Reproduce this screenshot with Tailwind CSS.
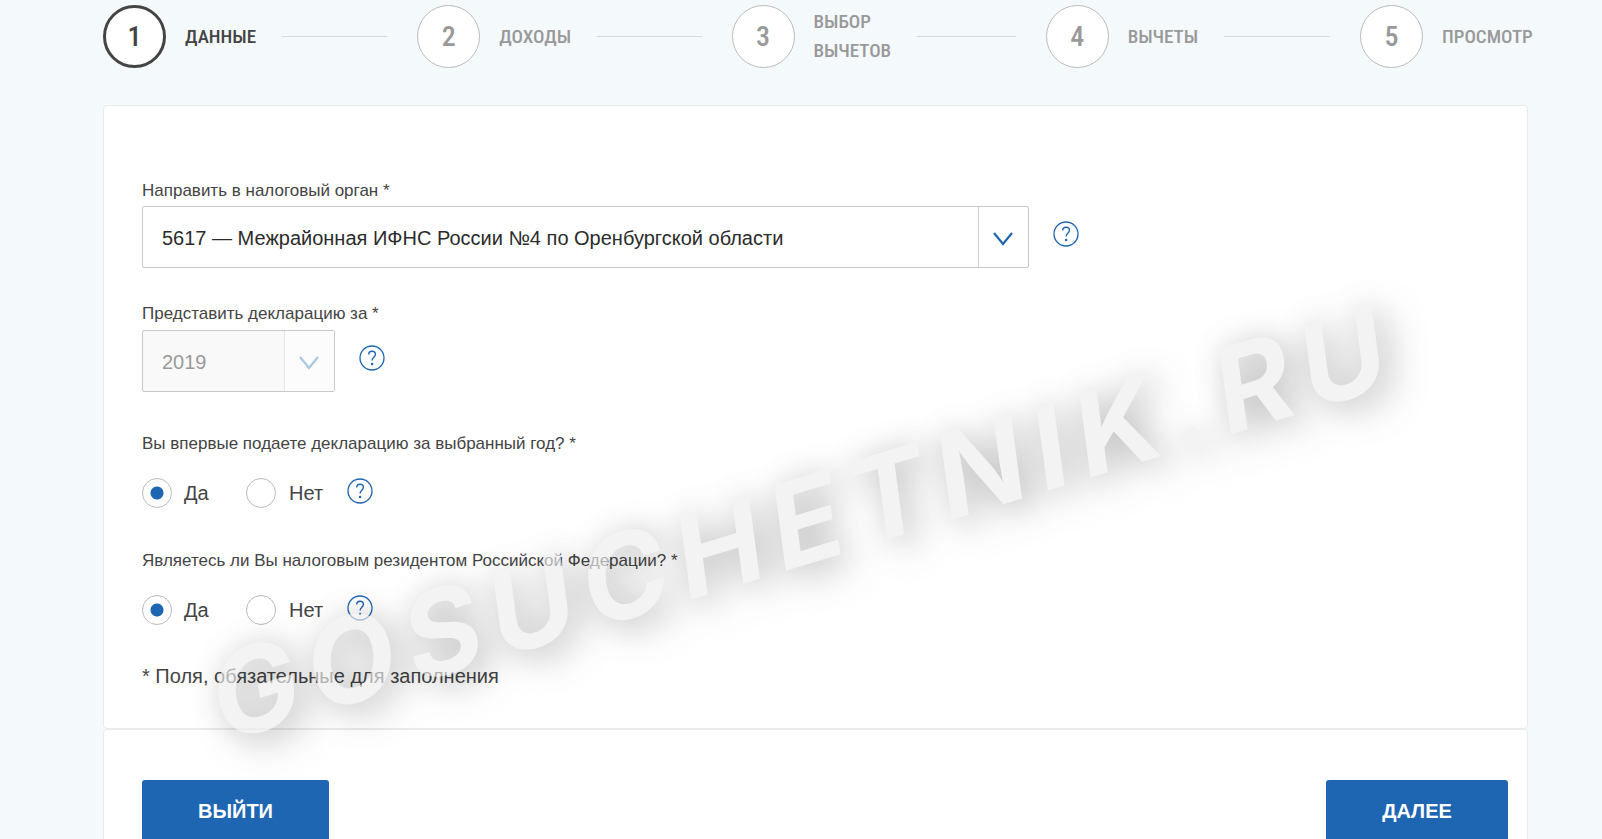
<!DOCTYPE html>
<html lang="ru">
<head>
<meta charset="utf-8">
<meta name="viewport" content="width=device-width, initial-scale=1">
<title>Декларация 3-НДФЛ</title>
<script src="https://cdn.jsdelivr.net/npm/@tailwindcss/browser@4"></script>
</head>
<body class="relative min-h-screen overflow-x-hidden bg-[#f4f9fc] font-['Liberation_Sans',sans-serif] text-[#444]">
<svg class="hidden">
  <symbol id="help" viewBox="0 0 26 26">
    <circle cx="13" cy="13" r="12" fill="none" stroke="#1f66b2" stroke-width="1.3"/>
    <path d="M9.7 9.6C9.7 7.5 11 6.2 13 6.2s3.4 1.2 3.4 3c0 1.6-.9 2.4-1.8 3.2-.9.8-1.5 1.5-1.5 3.2" fill="none" stroke="#1f66b2" stroke-width="1.4"/>
    <circle cx="13.1" cy="19" r="1.3" fill="#1f66b2"/>
  </symbol>
  <symbol id="chevron" viewBox="0 0 20 14">
    <path d="M1 1l9 11L19 1" fill="none" stroke="currentColor" stroke-width="2.2"/>
  </symbol>
</svg>

<main class="pl-[103px] pr-[74px] pt-1">
  <ol class="flex h-16 items-center font-['Liberation_Sans_Narrow','Roboto_Condensed','Liberation_Sans',sans-serif] text-[19px] leading-[29px] font-medium text-[#999]">
    <li class="flex flex-1 items-center text-[#444]">
      <span class="flex size-[63px] shrink-0 items-center justify-center rounded-full border-3 border-[#444] bg-white text-[28px]">1</span>
      <span class="ml-[19px]">ДАННЫЕ</span>
      <span class="mr-[30px] ml-[26px] h-px flex-1 bg-[#d8d8d5]"></span>
    </li>
    <li class="flex flex-1 items-center">
      <span class="flex size-[63px] shrink-0 items-center justify-center rounded-full border border-[#bbb] bg-white text-[28px]">2</span>
      <span class="ml-[19px]">ДОХОДЫ</span>
      <span class="mr-[30px] ml-[26px] h-px flex-1 bg-[#d8d8d5]"></span>
    </li>
    <li class="flex flex-1 items-center">
      <span class="flex size-[63px] shrink-0 items-center justify-center rounded-full border border-[#bbb] bg-white text-[28px]">3</span>
      <span class="ml-[19px]">ВЫБОР<br>ВЫЧЕТОВ</span>
      <span class="mr-[30px] ml-[26px] h-px flex-1 bg-[#d8d8d5]"></span>
    </li>
    <li class="flex flex-1 items-center">
      <span class="flex size-[63px] shrink-0 items-center justify-center rounded-full border border-[#bbb] bg-white text-[28px]">4</span>
      <span class="ml-[19px]">ВЫЧЕТЫ</span>
      <span class="mr-[30px] ml-[26px] h-px flex-1 bg-[#d8d8d5]"></span>
    </li>
    <li class="flex w-[168px] items-center">
      <span class="flex size-[63px] shrink-0 items-center justify-center rounded-full border border-[#bbb] bg-white text-[28px]">5</span>
      <span class="ml-[19px]">ПРОСМОТР</span>
    </li>
  </ol>

  <form>
    <section class="mt-[37px] rounded-sm border border-[#e9ebeb] bg-white px-[38px] pt-[73px] pb-10 text-[17px] leading-6">
      <label for="office" class="block">Направить в налоговый орган *</label>
      <div class="mt-[3px] flex items-center gap-6">
        <div class="relative w-full max-w-[887px]">
          <select id="office" class="block h-[62px] w-full appearance-none rounded-xs border border-[#c8c8c8] bg-white pt-0.5 pr-14 pl-[19px] text-xl text-[#2b2b2b]">
            <option>5617 — Межрайонная ИФНС России №4 по Оренбургской области</option>
          </select>
          <span class="pointer-events-none absolute inset-y-px right-px flex w-[50px] items-center justify-center border-l border-[#d0d0d0] pr-0.5 text-[#1f66b2]"><svg class="mt-1 h-3.5 w-5"><use href="#chevron"/></svg></span>
        </div>
        <button type="button" aria-label="Справка" class="mb-1.5 shrink-0"><svg class="block size-[26px]"><use href="#help"/></svg></button>
      </div>

      <label for="year" class="mt-[34px] block">Представить декларацию за *</label>
      <div class="mt-1 flex items-center gap-6">
        <div class="relative w-[193px]">
          <select id="year" disabled class="block h-[62px] w-full appearance-none rounded-xs border border-[#c8c8c8] bg-[#f9f9f9] pt-0.5 pr-14 pl-[19px] text-xl text-[#999] opacity-100">
            <option>2019</option>
          </select>
          <span class="pointer-events-none absolute inset-y-px right-px flex w-[50px] items-center justify-center border-l border-[#e6e6e6] bg-[#fcfcfc] pr-0.5 text-[#a9c6e3]"><svg class="mt-1 h-3.5 w-5"><use href="#chevron"/></svg></span>
        </div>
        <button type="button" aria-label="Справка" class="mb-1.5 shrink-0"><svg class="block size-[26px]"><use href="#help"/></svg></button>
      </div>

      <fieldset class="mt-10">
        <legend>Вы впервые подаете декларацию за выбранный год? *</legend>
        <div class="mt-[22px] flex h-[30px] items-center text-xl">
          <label class="flex w-[104px] items-center gap-3"><input type="radio" name="first" checked class="size-[30px] appearance-none rounded-full border border-[#bbb] bg-white checked:bg-[radial-gradient(circle,#1f66b2_6px,#fff_7px)]">Да</label>
          <label class="flex items-center gap-[13px]"><input type="radio" name="first" class="size-[30px] appearance-none rounded-full border border-[#bbb] bg-white checked:bg-[radial-gradient(circle,#1f66b2_6px,#fff_7px)]">Нет</label>
          <button type="button" aria-label="Справка" class="mb-1 ml-6"><svg class="block size-[26px]"><use href="#help"/></svg></button>
        </div>
      </fieldset>

      <fieldset class="mt-[41px]">
        <legend>Являетесь ли Вы налоговым резидентом Российской Федерации? *</legend>
        <div class="mt-[22px] flex h-[30px] items-center text-xl">
          <label class="flex w-[104px] items-center gap-3"><input type="radio" name="resident" checked class="size-[30px] appearance-none rounded-full border border-[#bbb] bg-white checked:bg-[radial-gradient(circle,#1f66b2_6px,#fff_7px)]">Да</label>
          <label class="flex items-center gap-[13px]"><input type="radio" name="resident" class="size-[30px] appearance-none rounded-full border border-[#bbb] bg-white checked:bg-[radial-gradient(circle,#1f66b2_6px,#fff_7px)]">Нет</label>
          <button type="button" aria-label="Справка" class="mb-1 ml-6"><svg class="block size-[26px]"><use href="#help"/></svg></button>
        </div>
      </fieldset>

      <p class="mt-[39px] text-xl leading-6">* Поля, обязательные для заполнения</p>
    </section>

    <section class="flex justify-between rounded-t-sm border border-[#e9ebeb] bg-white pt-[50px] pr-[19px] pl-[38px] text-xl font-bold text-white">
      <button type="button" class="h-[62px] w-[187px] rounded-t-[3px] bg-[#1f66b2]">ВЫЙТИ</button>
      <button type="button" class="h-[62px] w-[182px] rounded-t-[3px] bg-[#1f66b2]">ДАЛЕЕ</button>
    </section>
  </form>
</main>

<!-- Site watermark laid over the form -->
<div class="pointer-events-none absolute top-[521px] left-[803px] -translate-x-1/2 -translate-y-1/2 -rotate-17 font-['Inter',sans-serif] text-[117px] leading-none font-bold tracking-widest whitespace-nowrap text-[#ededed] italic opacity-65 [text-shadow:0_0_30px_rgb(0_0_0/0.15),10px_12px_36px_rgb(0_0_0/0.35)]">GOSUCHETNIK.RU</div>
</body>
</html>
